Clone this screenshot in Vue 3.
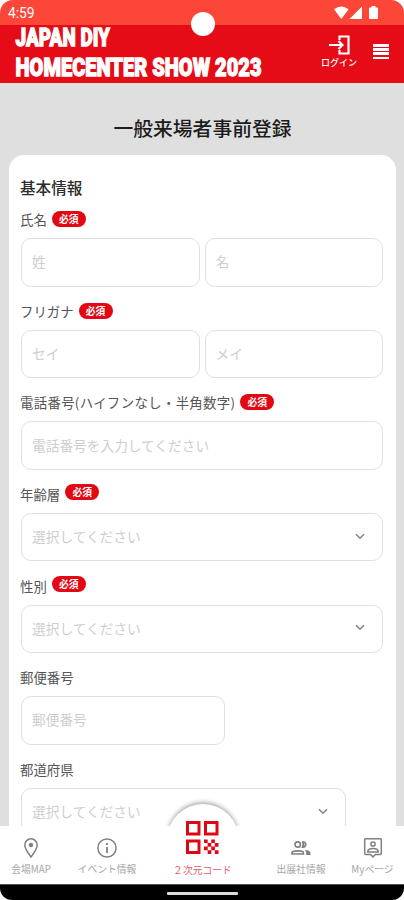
<script setup>
const fields = [
  { label: '氏名', required: true, inputs: ['姓', '名'] },
  { label: 'フリガナ', required: true, inputs: ['セイ', 'メイ'] },
  { label: '電話番号(ハイフンなし・半角数字)', required: true, inputs: ['電話番号を入力してください'], wide: true },
  { label: '年齢層', required: true, inputs: ['選択してください'], select: true, raised: true },
  { label: '性別', required: true, inputs: ['選択してください'], select: true, raised: true },
  { label: '郵便番号', inputs: ['郵便番号'], size: 'short' },
  { label: '都道府県', inputs: ['選択してください'], select: true, size: 'medium' },
]
</script>

<template>
  <div class="phone">
    <div class="status">
      <span>4:59</span>
      <svg class="signals" width="46" height="14" viewBox="0 0 46 14" fill="#fff">
        <path d="M0 3.2Q7.3-2.2 14.6 3.2L7.3 13Z" />
        <path d="M28 .5V13H15.5Z" />
        <path d="M36 1.4h1.5V0h4v1.4H43q1 0 1 1V12q0 1-1 1h-7q-1 0-1-1V2.400q0-1 1-1Z" />
      </svg>
      <i class="camera"></i>
    </div>
    <header class="header">
      <svg class="brand" width="264" height="58" viewBox="0 0 264 58">
        <text transform="translate(15.500 21) scale(.75 1)" textLength="126" lengthAdjust="spacingAndGlyphs">JAPAN DIY</text>
        <text transform="translate(15.500 50.500) scale(.75 1)" textLength="328" lengthAdjust="spacingAndGlyphs">HOMECENTER SHOW 2023</text>
      </svg>
      <div class="login">
        <svg width="22" height="20" viewBox="0 0 22 20" fill="none" stroke="#fff" stroke-width="2.200">
          <path d="M11.500 5V1.500H20.500V18.500H11.500V15M1 10H14M10.500 6L14.500 10L10.500 14" />
        </svg>
        <span>ログイン</span>
      </div>
      <div class="menu"><i></i><i></i><i></i><i></i></div>
    </header>

    <main class="content">
      <h1>一般来場者事前登録</h1>
      <section class="card">
        <h2>基本情報</h2>
        <div v-for="f in fields" :key="f.label" class="field">
          <div class="label">
            <span :class="{ wide: f.wide }">{{ f.label }}</span>
            <b v-if="f.required" class="badge" :class="{ raised: f.raised }">必須</b>
          </div>
          <div class="inputs" :class="f.size">
            <div v-for="p in f.inputs" :key="p" class="input">
              <span>{{ p }}</span>
              <svg v-if="f.select" width="10" height="7" viewBox="0 0 10 7" fill="none" stroke="#858585" stroke-width="1.600">
                <path d="M1 1.200L5 5.200L9 1.200" />
              </svg>
            </div>
          </div>
        </div>
      </section>
    </main>

    <div class="halo"></div>
    <nav class="nav">
      <div class="tab map">
        <svg width="22" height="22" viewBox="0 0 22 22" fill="none" stroke="#808080" stroke-width="1.500">
          <path d="M11 20C8 16 4.800 12 4.800 8A6.200 6.200 0 0 1 17.200 8C17.200 12 14 16 11 20Z" />
          <circle cx="11" cy="8" r="2.200" fill="#808080" stroke="none" />
        </svg>
        <span>会場MAP</span>
      </div>
      <div class="tab event">
        <svg width="22" height="22" viewBox="0 0 22 22" fill="none" stroke="#808080" stroke-width="1.500">
          <circle cx="11" cy="11" r="9.100" />
          <path d="M11 10V16M11 6V8" stroke-width="1.800" />
        </svg>
        <span>イベント情報</span>
      </div>
      <div class="tab code">
        <svg width="33" height="34" viewBox="0 0 33 34" fill="none" stroke="#df0713" stroke-width="3">
          <path d="M1.500 1.500H13V13H1.500ZM19.500 1.500H31V13H19.500ZM1.500 20H13V31.500H1.500Z" />
          <path fill="#df0713" stroke="none" d="M18 18.500h3.700v3.600H18zM25.200 18.500h3.700v3.600h-3.700zM21.600 22h3.700v3.700h-3.700zM28.800 22h3.700v3.700h-3.700zM18 25.600h3.700v3.700H18zM25.200 25.600h3.700v3.700h-3.700zM21.600 29.200h3.700v3.700h-3.700zM28.800 29.200h3.700v3.700h-3.700z" />
        </svg>
        <span>２次元コード</span>
      </div>
      <div class="tab exhibitor">
        <svg width="22" height="22" viewBox="0 0 22 22" fill="none" stroke="#808080" stroke-width="1.700">
          <circle cx="7.700" cy="7.500" r="2.700" />
          <path d="M12.500 4.800A2.750 2.750 0 1 1 12.500 10.200Q14.500 7.500 12.500 4.800M2 17V15.800Q2 13.800 7.700 13.800Q13.400 13.800 13.400 15.800V17Z" />
          <path d="M15 13q5.500.4 5.500 3.200V18H16.200V16.200q0-2-1.200-3.200Z" fill="#808080" stroke="none" />
        </svg>
        <span>出展社情報</span>
      </div>
      <div class="tab mypage">
        <svg width="22" height="22" viewBox="0 0 22 22" fill="none" stroke="#808080" stroke-width="1.500">
          <path d="M3.500 1.700H18.500Q19.300 1.700 19.300 2.500V16.500Q19.300 17.400 18.500 17.400H13.500L11 19.900L8.500 17.400H3.500Q2.700 17.400 2.700 16.500V2.500Q2.700 1.700 3.500 1.700Z" />
          <circle cx="11" cy="7" r="2.100" />
          <path d="M5.800 15V14Q6.500 11.400 11 11.400T16.200 14V15Z" />
        </svg>
        <span>Myページ</span>
      </div>
    </nav>
    <div class="system"><i></i></div>
  </div>
</template>

<style>
body { background: #fff; }
</style>

<style scoped>
* { box-sizing: border-box; }
.phone {
  position: relative;
  display: flex;
  flex-direction: column;
  width: 404px;
  height: 900px;
  overflow: hidden;
  border-radius: 13px 13px 12px 12px;
  background: #dfdfdf;
  font-family: "Noto Sans CJK JP", sans-serif;
  color: #555;
}
.status {
  position: relative;
  flex: none;
  display: flex;
  justify-content: space-between;
  height: 25px;
  padding: 5px 24px 0 8px;
  background: #fb4638;
  color: #fff;
  font: 13.800px/16px Roboto, sans-serif;
}
.signals { margin-top: 1px; }
.camera {
  position: absolute;
  z-index: 2;
  left: 191px;
  top: 12px;
  width: 24px;
  height: 24px;
  border-radius: 50%;
  background: #fff;
}
.header {
  flex: none;
  display: flex;
  height: 58px;
  background: #e50b17;
  color: #fff;
}
.brand { flex: none; overflow: visible; }
.brand text {
  font: 900 26.500px Roboto, sans-serif;
  fill: #fff;
  stroke: #fff;
  stroke-width: 1.300px;
}
.login {
  flex: none;
  display: flex;
  flex-direction: column;
  align-items: center;
  width: 40px;
  margin-left: 55px;
  padding-top: 10px;
}
.login span { margin-top: 1px; font-size: 9px; line-height: 14px; font-weight: 500; white-space: nowrap; }
.menu { display: flex; flex-direction: column; gap: 1.600px; margin: 19px 0 0 14px; }
.menu i { width: 16px; height: 2.600px; background: #fff; }
.content { flex: 1; min-height: 0; overflow: hidden; padding: 0 8px 0 9px; }
h1 {
  margin: 0;
  height: 72px;
  padding-top: 30px;
  text-align: center;
  font-size: 19.800px;
  line-height: 30px;
  font-weight: 500;
  color: #1c1c1c;
}
.card { height: 720px; padding: 20px 13px 0 11px; border-radius: 15px; background: #fff; }
h2 { margin: 0; font-size: 15.600px; line-height: 25px; font-weight: 500; color: #2c2c2c; }
.field { height: 91.650px; }
.label { display: flex; align-items: center; gap: 5px; height: 38px; font-size: 13.400px; line-height: 20px; }
.wide { letter-spacing: .32px; }
.badge {
  width: 34px;
  height: 16px;
  border-radius: 8px;
  background: #e20712;
  color: #fff;
  font-size: 9.800px;
  line-height: 16.500px;
  text-align: center;
}
.raised { margin-bottom: 4px; }
.inputs { display: flex; gap: 5px; height: 48.500px; margin-left: 1px; }
.short { width: 204px; }
.medium { width: 325px; }
.input {
  flex: 1;
  display: flex;
  align-items: center;
  justify-content: space-between;
  padding: 0 17.500px 2px 10px;
  border: 1.500px solid #e0e0e0;
  border-radius: 10px;
  color: #cecece;
  font-size: 13.700px;
}
.halo {
  position: absolute;
  left: 167px;
  top: 804px;
  width: 72px;
  height: 72px;
  border-radius: 50%;
  background: #fff;
  box-shadow: 0 -2px 4px rgba(0, 0, 0, .32);
}
.nav {
  position: relative;
  flex: none;
  display: flex;
  height: 58px;
  background: #fff;
  color: #a6a6a6;
}
.tab { display: flex; flex-direction: column; align-items: center; padding-top: 11px; font-size: 9.800px; line-height: 14px; white-space: nowrap; }
.tab span { margin-top: 2.500px; }
.map { width: 62px; }
.event { width: 90px; }
.code { width: 101px; padding: 0; color: #e65a6a; }
.code svg { flex: none; margin-top: -5px; }
.code span { margin-top: 8px; }
.exhibitor { width: 96px; }
.mypage { width: 47px; }
.system { position: relative; flex: none; display: flex; align-items: center; justify-content: center; height: 16px; border-top: 1px solid #555; background: #000; }
.system i { width: 71px; height: 3px; margin-top: 2px; background: #ddd; border-radius: 1px; }
</style>
